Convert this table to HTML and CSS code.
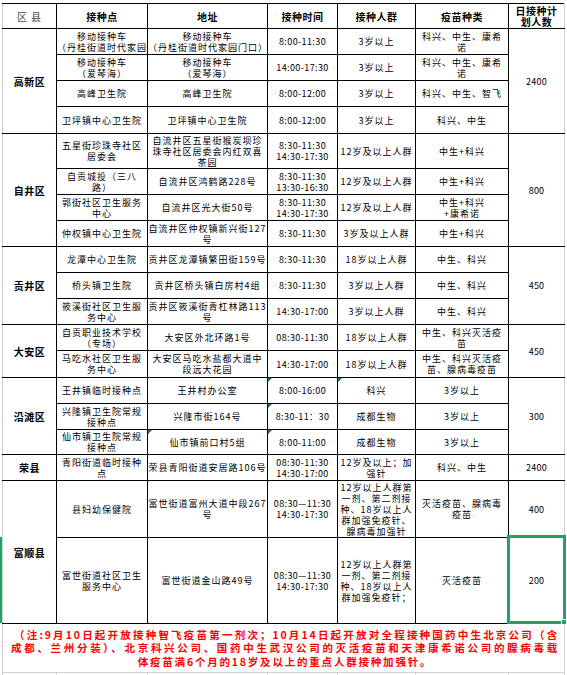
FILE: index.html
```html
<!DOCTYPE html>
<html lang="zh-CN">
<head>
<meta charset="utf-8">
<title>自贡市新冠疫苗接种点</title>
<link rel="stylesheet" href="styles.css">
</head>
<body>
<div class="sheet">
<table class="grid">
<colgroup><col class="c1"><col class="c2"><col class="c3"><col class="c4"><col class="c5"><col class="c6"><col class="c7"></colgroup>
<tr class="h25 head">
<td class="first county">区 县</td><td>接种点</td><td>地址</td><td>接种时间</td><td>接种人群</td><td>疫苗种类</td><td class="last">日接种计<br>划人数</td>
</tr>
<tr class="h26">
<td class="first dist" rowspan="4">高新区</td>
<td class="top"><div class="clip">移动接种车<br>（丹桂街道时代家园<br>门口）</div></td>
<td>移动接种车<br>（丹桂街道时代家园门口）</td>
<td class="t">8:00-11:30</td><td>3岁以上</td><td>科兴、中生、康希<br>诺</td>
<td class="last num" rowspan="4">2400</td>
</tr>
<tr class="h26">
<td>移动接种车<br>（爱琴海）</td><td>移动接种车<br>（爱琴海）</td><td class="t">14:00-17:30</td><td>3岁以上</td><td>科兴、中生、康希<br>诺</td>
</tr>
<tr class="h26">
<td>高峰卫生院</td><td>高峰卫生院</td><td class="t">8:00-12:00</td><td>3岁以上</td><td>科兴、中生、智飞</td>
</tr>
<tr class="h27">
<td>卫坪镇中心卫生院</td><td>卫坪镇中心卫生院</td><td class="t">8:00-12:00</td><td>3岁以上</td><td>科兴、中生</td>
</tr>
<tr class="h35">
<td class="first dist" rowspan="4">自井区</td>
<td>五星街珍珠寺社区<br>居委会</td><td>自流井区五星街猴炭坝珍<br>珠寺社区居委会内红双喜<br>茶园</td>
<td class="t">8:30-11:30<br>14:30-17:30</td><td>12岁及以上人群</td><td>中生+科兴</td>
<td class="last num" rowspan="4">800</td>
</tr>
<tr class="h26">
<td>自贡城投（三八<br>路）</td><td>自流井区鸿鹤路228号</td><td class="t">8:30-11:30<br>13:30-16:30</td><td>12岁及以上人群</td><td>中生+科兴</td>
</tr>
<tr class="h26">
<td>郭街社区卫生服务<br>中心</td><td>自流井区光大街50号</td><td class="t">8:30-11:30<br>14:30-17:30</td><td>12岁及以上人群</td><td>中生+科兴<br>+康希诺</td>
</tr>
<tr class="h26">
<td>仲权镇中心卫生院</td><td>自流井区仲权镇新兴街127<br>号</td><td class="t">8:30-11:30</td><td>3岁及以上人群</td><td>中生+科兴</td>
</tr>
<tr class="h26">
<td class="first dist" rowspan="3">贡井区</td>
<td>龙潭中心卫生院</td><td>贡井区龙潭镇繁田街159号</td><td class="t">8:30-11:30</td><td>18岁以上人群</td><td>中生、科兴</td>
<td class="last num" rowspan="3">450</td>
</tr>
<tr class="h26">
<td>桥头镇卫生院</td><td>贡井区桥头镇白房村4组</td><td class="t">8:30-11:30</td><td>3岁以上人群</td><td>中生、科兴</td>
</tr>
<tr class="h26">
<td>筱溪街社区卫生服<br>务中心</td><td>贡井区筱溪街青杠林路113<br>号</td><td class="t">14:30-17:00</td><td>3岁以上人群</td><td>中生、科兴</td>
</tr>
<tr class="h26">
<td class="first dist" rowspan="2">大安区</td>
<td>自贡职业技术学校<br>（专场）</td><td>大安区外北环路1号</td><td class="t">08:30-11:30</td><td>18岁以上人群</td><td>中生、科兴灭活疫<br>苗</td>
<td class="last num" rowspan="2">450</td>
</tr>
<tr class="h27">
<td>马吃水社区卫生服<br>务中心</td><td>大安区马吃水盐都大道中<br>段远大花园</td><td class="t">14:30-17:00</td><td>18岁以上人群</td><td>中生、科兴灭活疫<br>苗、腺病毒疫苗</td>
</tr>
<tr class="h26">
<td class="first dist" rowspan="3">沿滩区</td>
<td>王井镇临时接种点</td><td>王井村办公室</td><td class="t tri">8:00-16:00</td><td class="tri">科兴</td><td>3岁以上</td>
<td class="last num" rowspan="3">300</td>
</tr>
<tr class="h26">
<td>兴隆镇卫生院常规<br>接种点</td><td>兴隆市街164号</td><td class="t tri">8:30-11：30</td><td>成都生物</td><td>3岁以上</td>
</tr>
<tr class="h25">
<td>仙市镇卫生院常规<br>接种点</td><td class="tri">仙市镇前口村5组</td><td class="t tri">8:00-11:00</td><td>成都生物</td><td>3岁以上</td>
</tr>
<tr class="h26">
<td class="first dist">荣县</td>
<td>青阳街道临时接种<br>点</td><td>荣县青阳街道安居路106号</td><td class="t">08:30-11:30<br>14:30-17:00</td><td>12岁及以上；加<br>强针</td><td>科兴、中生</td>
<td class="last num">2400</td>
</tr>
<tr class="h57">
<td class="first dist" rowspan="2">富顺县</td>
<td>县妇幼保健院</td><td>富世街道富州大道中段267<br>号</td><td class="t">08:30—11:30<br>14:30-17:30</td>
<td>12岁以上人群第<br>一剂、第二剂接<br>种、18岁以上人<br>群加强免疫针、<br>腺病毒加强针</td><td>灭活疫苗、腺病毒<br>疫苗</td>
<td class="last num">400</td>
</tr>
<tr class="h86">
<td>富世街道社区卫生<br>服务中心</td><td>富世街道金山路49号</td><td class="t">08:30—11:30<br>14:30-17:30</td>
<td>12岁以上人群第<br>一剂、第二剂接<br>种、18岁以上人<br>群加强免疫针；</td><td>灭活疫苗</td>
<td class="last num">200</td>
</tr>
<tr class="h49">
<td class="note" colspan="7">
<div class="nl l1">（注:9月10日起开放接种智飞疫苗第一剂次；10月14日起开放对全程接种国药中生北京公司（含</div>
<div class="nl l2">成都、兰州分装）、北京科兴公司、国药中生武汉公司的灭活疫苗和天津康希诺公司的腺病毒载</div>
<div class="nl l3">体疫苗满6个月的18岁及以上的重点人群接种加强针。</div>
</td>
</tr>
<tr class="ghost">
<td></td><td></td><td></td><td></td><td></td><td></td><td></td>
</tr>
</table>
<div class="rowmark"></div>
<div class="selection"><span class="handle"></span></div>
</div>
</body>
</html>
```

FILE: styles.css
```css
* { box-sizing: border-box; }
html, body { margin: 0; padding: 0; background: #fff; }
body {
  font-family: "Noto Sans CJK SC", "Noto Sans", sans-serif;
  color: #000;
  width: 567px;
  height: 675px;
  overflow: hidden;
}
.sheet {
  position: relative;
  padding: 3px 0 0 2px;
}
.grid {
  border-collapse: collapse;
  table-layout: fixed;
  width: 563px;
}
.c1 { width: 54px; }
.c2 { width: 91px; }
.c3 { width: 120px; }
.c4 { width: 70px; }
.c5 { width: 78px; }
.c6 { width: 93px; }
.c7 { width: 56px; }

.grid td {
  border: 1px solid #000;
  padding: 0;
  text-align: center;
  vertical-align: middle;
  font-size: 9px;
  line-height: 11px;
  letter-spacing: 1px;
  white-space: nowrap;
  overflow: hidden;
}
.h25 { height: 25px; }
.h26 { height: 26px; }
.h27 { height: 27px; }
.h35 { height: 35px; }
.h57 { height: 57px; }
.h86 { height: 86px; }
.h49 { height: 49px; }

.grid td.first { border-left-color: #d0d0d0; }
.grid td.last { border-right-color: #d0d0d0; }

.head td {
  font-size: 10px;
  font-weight: 700;
  letter-spacing: 0.5px;
}
.grid .head td.county {
  font-weight: 400;
  color: #444;
  letter-spacing: 1px;
}
.grid td.dist {
  font-weight: 700;
  font-size: 10px;
  letter-spacing: 0.5px;
}
.grid td.t { letter-spacing: 0.4px; }
.grid td.num { letter-spacing: 0.2px; }
.grid td.top { vertical-align: top; }
.clip {
  height: 24px;
  overflow: hidden;
  padding-top: 2px;
}
.grid td.tri { position: relative; }
.grid td.tri::before {
  content: "";
  position: absolute;
  left: 0;
  top: 0;
  border-top: 4px solid #1e7b34;
  border-right: 4px solid transparent;
}

.grid td.note {
  border-color: #000 #d0d0d0 #d0d0d0 #d0d0d0;
  color: #ff0000;
  font-weight: 700;
  font-size: 10.5px;
  line-height: 13.5px;
  letter-spacing: 1.8px;
  padding: 0 5px 0 8px;
  white-space: normal;
}
.nl { white-space: nowrap; }
.l1 { text-align: justify; text-align-last: justify; padding-left: 3px; }
.l2 { text-align: justify; text-align-last: justify; }
.l3 { text-align: center; }

.ghost td {
  height: 4px;
  font-size: 0;
  line-height: 0;
  border-color: #d0d0d0;
}

.rowmark {
  position: absolute;
  left: 0;
  top: 537px;
  width: 2px;
  height: 86px;
  background: #21a366;
}
.selection {
  position: absolute;
  left: 507px;
  top: 535px;
  width: 59px;
  height: 89px;
  border: 3px solid #21a366;
}
.handle {
  position: absolute;
  right: -4px;
  bottom: -4px;
  width: 6px;
  height: 6px;
  background: #21a366;
  border: 1px solid #fff;
}
```
